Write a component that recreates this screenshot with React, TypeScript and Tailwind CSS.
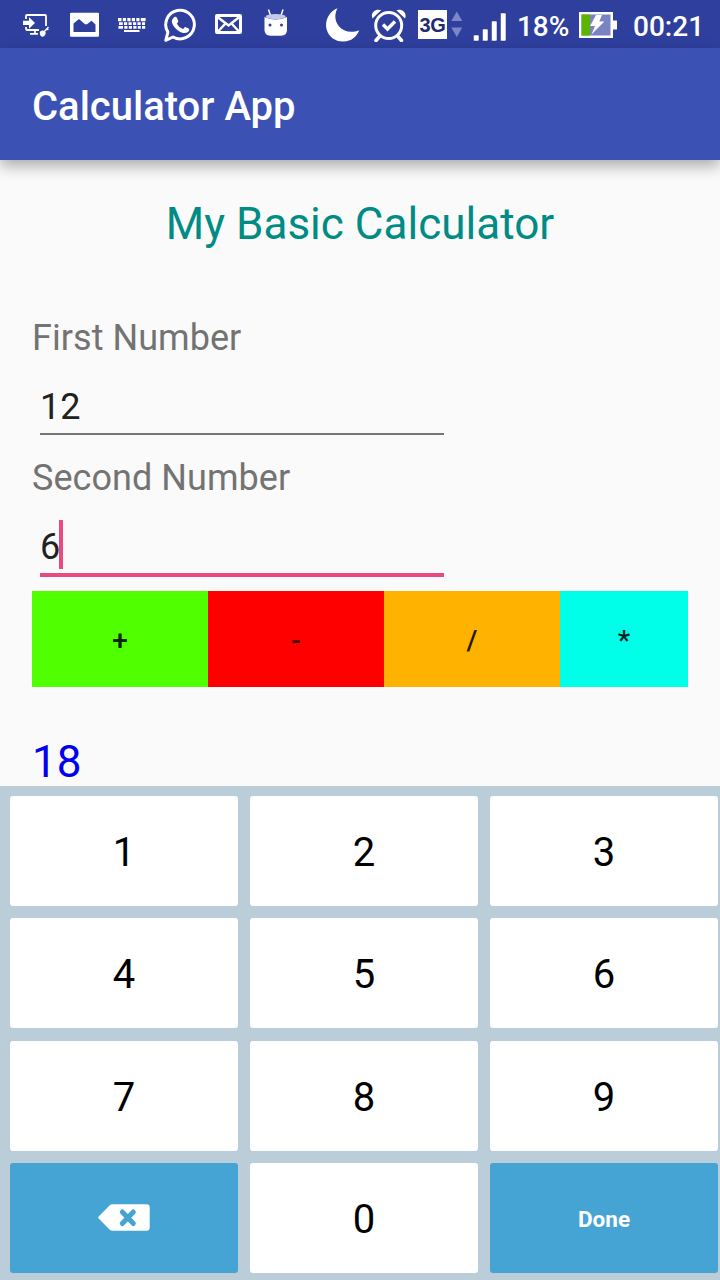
import React from "react";

function StatusBar() {
  return (
    <div className="flex h-12 shrink-0 items-start bg-[#2f3f9e] text-white">
      <svg className="ml-[22px] mt-3 h-[26px] w-7 shrink-0" viewBox="22 12 28 26" fill="none" stroke="#fff" strokeWidth="1.8">
        <path d="M26 19V15.8Q26 15 27 15H45Q46 15 46 16V26M26 27v1.500Q26 30 27 30H39M35 30v3.500M30 33.800h8" />
        <path d="M23 20.700h6v-3.700l6 5.900-6 5.900v-3.700h-6z" fill="#fff" stroke="none" />
        <path d="M48.500 27l-5.500 6M46.500 30l2-1" strokeWidth="1.300" />
        <path d="M40 31.500c2-.5 2.500-1.500 4-.5 1.500.5 2 1.500 1.500 3-.5 2-2.500 3-4 2.500s-2-3-1.500-5z" fill="#fff" stroke="none" />
      </svg>
      <svg className="ml-5 mt-3 h-[25px] w-[29px] shrink-0" viewBox="69.500 12 29 25">
        <path fillRule="evenodd" fill="#fff" d="M70.500 12.800h27q1 0 1 1v22q0 1-1 1h-27q-1 0-1-1v-22q0-1 1-1zM73 32h22v-7.500l-4-3.700-4.500 3.400h-2l-6-5.200L73 23.500z" />
      </svg>
      <svg className="ml-[19px] mt-[17px] h-4 w-[29px] shrink-0" viewBox="118 17 29 16" fill="#fff">
        <path d="M118 18h3.500v3.200H118zM122.800 18h3.200v3.200h-3.200zM127.300 18h3.200v3.200h-3.200zM131.800 18h3.200v3.200h-3.200zM136.300 18h3.200v3.200h-3.200zM140.800 18h4.800v3.200h-4.800zM119 22.200h3.800v2.800H119zM124 22.200h3.200V25H124zM128.500 22.200h3.200V25h-3.200zM133 22.200h3.200V25H133zM137.500 22.200h3.200V25h-3.200zM142 22.200h3V25h-3zM118.500 26h4.500v2.800h-4.500zM124.300 26h3.200v2.800h-3.200zM128.800 26h3.200v2.800h-3.200zM133.300 26h3.200v2.800h-3.200zM137.800 26h3v2.800h-3zM142 26h3.200v2.800H142zM124 29.900h15.500V32H124z" />
      </svg>
      <svg className="ml-[17px] mt-[7px] h-9 w-[33px] shrink-0" viewBox="164.700 7 33 36">
        <path fill="none" stroke="#fff" strokeWidth="3" strokeLinejoin="round" d="M166.500 40.300l2.100-8.200A14.300 14.300 0 1 1 173.700 37z" />
        <path fill="#fff" d="M174.800 17.300c1-.7 2.300-.6 2.900.6l1.300 3.100c.3.900-1.500 2.100-1.300 2.800 1.300 2.500 3.200 4.200 5.900 5.200.8 0 1.700-2.400 2.600-2l3.500 1.800c.5.500 0 2.300-1 3.200-2.400 2-5.500 1-8.500-.5-3.500-2-6.300-5.200-7.400-8.500-.7-2.200.2-4.400 2-5.700z" />
      </svg>
      <svg className="ml-[18px] mt-[13px] h-[22px] w-[27px] shrink-0" viewBox="215 13 27 22">
        <rect x="216.500" y="15.500" width="24" height="17" rx=".5" fill="none" stroke="#fff" strokeWidth="3" />
        <path d="M217.500 17l11 8.500 11-8.500M218 31.500l7.500-8M239 31.500l-7.500-8" fill="none" stroke="#fff" strokeWidth="2.500" />
      </svg>
      <svg className="ml-[22px] mt-2 h-7 w-[23px] shrink-0" viewBox="264 8 23 28">
        <path d="M268.500 9.500l2 6M283 9.500l-2 6" stroke="#fff" strokeWidth="1.500" />
        <path d="M264.500 17q11 5 22.500 0v13q0 5.700-6 5.700h-10.500q-6 0-6-5.700z" fill="#fff" />
        <ellipse cx="275.700" cy="16.600" rx="10" ry="2.700" fill="#c3c9ea" />
        <circle cx="270" cy="25" r="1.500" fill="#2f3f9e" />
        <circle cx="281.500" cy="25" r="1.500" fill="#2f3f9e" />
      </svg>
      <svg className="ml-[39px] mt-2 h-[34px] w-[34px] shrink-0" viewBox="326 8 34 34">
        <path fill="#fff" d="M337.500 8.300C328 12 324.800 22 326.500 29c2 8 9 12.800 17 12.500 8-.3 13-4.500 15.700-11.300-8 3.300-16 1.500-20.500-4.200-4-5-4.500-11.500-1.200-17.700z" />
      </svg>
      <svg className="ml-[11px] mt-2 h-[34px] w-9 shrink-0" viewBox="371 8 36 34" fill="none" stroke="#fff">
        <circle cx="388.700" cy="25.500" r="13" strokeWidth="3" />
        <path d="M383 24.500l4.500 4.500 7.500-7.500" strokeWidth="3.400" />
        <path d="M379.500 36.500l-3.500 4M398 36.500l3.500 4" strokeWidth="3.500" strokeLinecap="round" />
        <path d="M372.500 18.500c-2.500-5.500 3-10.500 8.700-8.200zM405 18.500c2.500-5.500-3-10.500-8.700-8.200z" fill="#fff" stroke="none" />
      </svg>
      <div className="ml-[11px] mt-2.5 flex h-[29px] w-[29px] shrink-0 items-center justify-center bg-white pt-px font-['Liberation_Sans',sans-serif] text-[20px] font-bold tracking-[-0.3px] text-[#202b70]">
        3G
      </div>
      <svg className="ml-1 mt-2.5 h-7 w-3 shrink-0" viewBox="451 10 12 28" fill="#7c86c8">
        <path d="M456.800 11.500l5.500 9.500h-11zM456.800 37l-5.500-9.500h11z" />
      </svg>
      <svg className="ml-2.5 mt-3 h-[30px] w-[34px] shrink-0" viewBox="473 12 34 30" fill="#fff" stroke="#263583" strokeWidth=".5">
        <rect x="473.500" y="35" width="5.500" height="6" rx="1" />
        <rect x="482.500" y="29" width="5.500" height="12" rx="1" />
        <rect x="491.500" y="21" width="5.500" height="20" rx="1" />
        <rect x="500.500" y="13" width="5.500" height="28" rx="1" />
      </svg>
      <span className="ml-2.5 mt-[9px] w-[53px] shrink-0 whitespace-nowrap text-[28px] font-medium leading-9 tracking-[-0.1px]">18%</span>
      <svg className="ml-2 mt-3 h-[26px] w-[39px] shrink-0" viewBox="578 12 39 26">
        <path d="M579 12h34v8.500h4v9h-4V38h-34z" fill="#fff" />
        <rect x="581.500" y="14.500" width="29" height="21" fill="#7a83c2" />
        <rect x="581.500" y="14.500" width="8.500" height="21" fill="#5bb500" />
        <path fill="#fff" d="M596 15h6l-2.700 6.500h5L591.500 34.500l3.500-8.500h-5z" />
      </svg>
      <span className="ml-4 mt-[9px] whitespace-nowrap text-[28px] font-medium leading-9">00:21</span>
    </div>
  );
}

type FieldProps = { label: string; value: string; active?: boolean };

function NumberField({ label, value, active }: FieldProps) {
  return (
    <div className="h-[140px]">
      <div className="h-[42px] text-[36px] leading-[42px] tracking-[0.05px] text-[#737373]">{label}</div>
      <div className="ml-2 flex h-[78px] w-[404px] items-start pt-[21px]">
        <span className="text-[36px] leading-[55px] text-[#212121]">{value}</span>
        {active && <span className="-ml-px h-[49px] w-1 bg-[#e94a80]" />}
      </div>
      <div className={active ? "ml-2 -mt-1 h-1 w-[404px] bg-[#e94a80]" : "ml-2 -mt-1 h-0.5 w-[404px] bg-[#757575]"} />
    </div>
  );
}

const operators = [
  { sign: "+", style: "w-44 bg-[#50ff00] text-[#082400]" },
  { sign: "-", style: "w-44 bg-[#ff0000] text-[#3a0000]" },
  { sign: "/", style: "w-44 bg-[#ffb300] text-[#241a00]" },
  { sign: "*", style: "w-32 bg-[#00ffe8] text-[#002421]" },
];

const digits = ["1", "2", "3", "4", "5", "6", "7", "8", "9"];

function Keypad() {
  return (
    <div className="grid h-[494px] shrink-0 grid-cols-[228px_228px_228px] grid-rows-[110px_110px_110px_110px] gap-x-3 gap-y-[12.300px] bg-[#bbcdd9] pl-2.5 pt-2.5 text-[40px] text-black">
      {digits.map((d) => (
        <button key={d} className="flex items-center justify-center rounded-[3px] bg-white pt-1">
          {d}
        </button>
      ))}
      <button aria-label="Delete" className="flex items-center justify-center rounded-[3px] bg-[#46a4d4]">
        <svg className="h-7 w-[52px]" viewBox="98 1204 52 28">
          <path d="M112.500 1204.300h34q3.200 0 3.200 3.200v20q0 3.200-3.200 3.200H112.500q-1.500 0-3-1.300l-10.800-10.900q-1-1 0-2l10.800-10.900q1.500-1.300 3-1.300z" fill="#fff" />
          <path d="M122.300 1212l11 11.500M133.300 1212l-11 11.500" stroke="#46a4d4" strokeWidth="5" strokeLinecap="round" />
        </svg>
      </button>
      <button className="flex items-center justify-center rounded-[3px] bg-white pt-1">0</button>
      <button className="flex items-center justify-center rounded-[3px] bg-[#46a4d4] pt-1 text-[22.500px] font-bold text-white">
        Done
      </button>
    </div>
  );
}

export default function App() {
  return (
    <div className="flex h-[1280px] w-[720px] flex-col overflow-hidden bg-[#fafafa] font-[Roboto,sans-serif]">
      <StatusBar />
      <header className="flex h-28 shrink-0 items-center bg-[#3c51b4] pl-8 pt-1.5 text-[40px] font-medium text-white shadow-[0_6px_14px_rgba(0,0,0,0.32)]">
        Calculator App
      </header>
      <main className="flex h-[626px] shrink-0 flex-col px-8">
        <h1 className="mt-[38px] h-[52px] text-center text-[44px] leading-[52px] tracking-[0.02px] text-[#008b84]">My Basic Calculator</h1>
        <div className="mt-[67px]">
          <NumberField label="First Number" value="12" />
          <NumberField label="Second Number" value="6" active />
        </div>
        <div className="-mt-[6px] flex h-24 shrink-0">
          {operators.map((o) => (
            <button key={o.sign} className={`flex items-center justify-center pt-[3px] text-[28px] font-medium ${o.style}`}>
              {o.sign}
            </button>
          ))}
        </div>
        <output className="mt-[49px] h-[52px] text-[44px] leading-[52px] text-[#0000ee]">18</output>
      </main>
      <Keypad />
    </div>
  );
}
